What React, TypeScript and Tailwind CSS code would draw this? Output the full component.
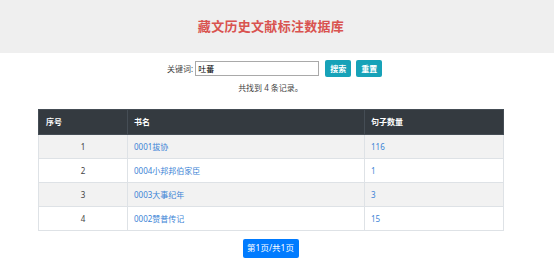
const ROWS = [
  { id: 1, name: "0001拔协", count: "116" },
  { id: 2, name: "0004小邦邦伯家臣", count: "1" },
  { id: 3, name: "0003大事纪年", count: "3" },
  { id: 4, name: "0002赞普传记", count: "15" },
];

export default function App() {
  return (
    <div
      className="min-h-screen bg-white text-[8px] text-[#444]"
      style={{ fontFamily: '"Noto Sans", "Noto Sans CJK SC", sans-serif' }}
    >
      {/* Header */}
      <div className="h-[53px] bg-[#efefef] flex items-center justify-center pr-[12px]">
        <h1 className="text-[13px] font-bold text-[#d9534f] leading-none tracking-[0.3px]">
          藏文历史文献标注数据库
        </h1>
      </div>

      {/* Search */}
      <div className="mt-[7px] flex items-center pl-[167px] h-[17px]">
        <label className="mr-[2px]">关键词:</label>
        <input
          defaultValue="吐蕃"
          className="w-[124px] h-[15px] border border-[#a9a9a9] px-[2px] text-[8px] text-black outline-none"
        />
        <button className="ml-[6px] w-[26px] h-[17px] rounded-[2px] bg-[#17a2b8] text-white text-[8px] font-bold">
          搜索
        </button>
        <button className="ml-[5px] w-[26px] h-[17px] rounded-[2px] bg-[#17a2b8] text-white text-[8px] font-bold">
          重置
        </button>
      </div>
      <div className="mt-[5px] w-[465px] ml-[38px] text-center leading-[12px]">
        共找到 4 条记录。
      </div>

      {/* Table */}
      <table className="mt-[15px] ml-[38px] w-[465px] border-collapse table-fixed">
        <colgroup>
          <col className="w-[89px]" />
          <col className="w-[237px]" />
          <col className="w-[139px]" />
        </colgroup>
        <thead>
          <tr className="bg-[#343a40] text-white h-[25px]">
            <th className="text-left font-bold pl-[7px] border border-[#454d55]">序号</th>
            <th className="text-left font-bold pl-[6px] border border-[#454d55]">书名</th>
            <th className="text-left font-bold pl-[6px] border border-[#454d55]">句子数量</th>
          </tr>
        </thead>
        <tbody>
          {ROWS.map((r, i) => (
            <tr key={r.id} className={`h-[24px] ${i % 2 === 0 ? "bg-[#f2f2f2]" : "bg-white"}`}>
              <td className="text-center border border-[#dee2e6]">{r.id}</td>
              <td className="pl-[6px] border border-[#dee2e6] text-[#3c84d6]">{r.name}</td>
              <td className="pl-[6px] border border-[#dee2e6] text-[#3c84d6]">{r.count}</td>
            </tr>
          ))}
        </tbody>
      </table>

      {/* Pagination */}
      <div className="w-[465px] ml-[38px] mt-[8px] flex justify-center">
        <button className="w-[56px] h-[19px] rounded-[2px] bg-[#007bff] text-white text-[8.5px] leading-none">
          第1页/共1页
        </button>
      </div>
    </div>
  );
}
